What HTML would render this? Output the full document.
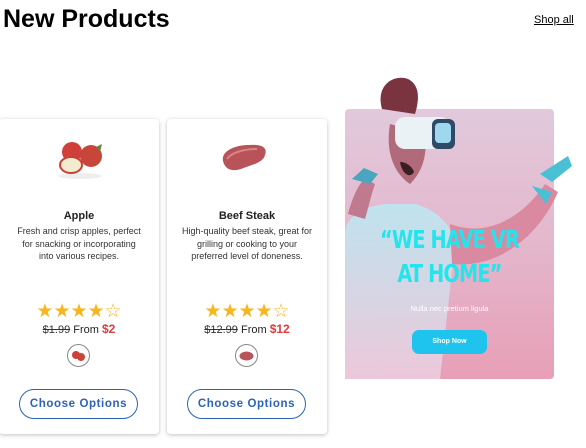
<!DOCTYPE html>
<html><head><meta charset="utf-8"><style>
*{margin:0;padding:0;box-sizing:border-box}
body{width:586px;height:448px;overflow:hidden;background:#fff;font-family:"Liberation Sans",Arial,sans-serif;position:relative}
h1{position:absolute;left:3px;top:5px;font-size:25px;font-weight:bold;color:#000}
.shop{position:absolute;left:534px;top:14px;font-size:11px;color:#000;text-decoration:underline}
.card{position:absolute;top:119px;width:160px;height:315px;background:#fff;border-radius:4px;box-shadow:0 1px 4px rgba(0,0,0,.25);text-align:center}
.t{position:absolute;top:91px;left:0;right:0;font-size:11px;font-weight:bold;color:#222}
.d{position:absolute;top:106px;left:0;right:0;font-size:9px;line-height:12.5px;color:#333;white-space:nowrap}
.stars{position:absolute;top:183px;left:0;right:0;font-size:19px;color:#f6b61e;line-height:20px}
.p{position:absolute;top:203px;left:0;right:0;font-size:11px;color:#222}
.p s{color:#333}.p b{color:#e03b3b;font-size:12px}
.th{position:absolute;top:225px;left:68px;width:23px;height:23px;border:1px solid #888;border-radius:50%}
.btn{position:absolute;top:270px;left:20px;width:119px;height:30px;border:1px solid #2b63b8;border-radius:15px;color:#2b63b8;font-size:11.5px;font-weight:bold;letter-spacing:.6px;line-height:28px}
.ban{position:absolute;left:345px;top:109px;width:209px;height:270px;border-radius:4px;background:linear-gradient(180deg,#e2c9dc 0%,#e4b7cc 50%,#e79fb6 100%)}
.vr{position:absolute;left:0;right:0;text-align:center;color:#22e5ee;font-weight:bold;font-size:25px;line-height:26px;font-family:'Liberation Sans Narrow','DejaVu Sans Condensed',sans-serif;white-space:nowrap;letter-spacing:-1px;transform:scaleX(0.86)}
</style></head><body>
<h1>New Products</h1>
<a class="shop">Shop all</a>

<div class="card" style="left:-1px">
  <svg style="position:absolute;left:55px;top:20px" width="52" height="40">
    <ellipse cx="26" cy="37" rx="22" ry="3" fill="#eee"/>
    <circle cx="18" cy="13" r="10" fill="#d0403a"/>
    <circle cx="37" cy="17" r="11" fill="#c8453a"/>
    <path d="M42 8 l6 -3 l-2 8z" fill="#5a8a3a"/>
    <ellipse cx="17" cy="26" rx="11" ry="8" fill="#f1ecd0" stroke="#c94036" stroke-width="2"/>
  </svg>
  <div class="t">Apple</div>
  <div class="d">Fresh and crisp apples, perfect<br>for snacking or incorporating<br>into various recipes.</div>
  <div class="stars">★★★★☆</div>
  <div class="p"><s>$1.99</s> From <b>$2</b></div>
  <div class="th"><svg width="21" height="21"><circle cx="8" cy="10" r="4" fill="#d0403a"/><circle cx="13" cy="12" r="4" fill="#c8453a"/></svg></div>
  <div class="btn">Choose Options</div>
</div>

<div class="card" style="left:167px">
  <svg style="position:absolute;left:50px;top:20px" width="56" height="40">
    <path d="M6 22 C4 12 18 6 32 6 C44 5 51 8 48 16 C46 24 34 26 24 30 C14 33 8 30 6 22Z" fill="#b8535a"/>
    <path d="M10 20 C14 14 26 10 40 10" stroke="#d8858a" stroke-width="2" fill="none"/>
  </svg>
  <div class="t">Beef Steak</div>
  <div class="d">High-quality beef steak, great for<br>grilling or cooking to your<br>preferred level of doneness.</div>
  <div class="stars">★★★★☆</div>
  <div class="p"><s>$12.99</s> From <b>$12</b></div>
  <div class="th"><svg width="21" height="21"><ellipse cx="10.5" cy="11" rx="7" ry="4.5" fill="#b8535a"/></svg></div>
  <div class="btn">Choose Options</div>
</div>

<div class="ban">
  <svg style="position:absolute;left:-5px;top:-35px" width="240" height="305">
    <defs><linearGradient id="sh" x1="0" y1="0" x2="0" y2="1"><stop offset="0" stop-color="#bfe3ee"/><stop offset="1" stop-color="#ecc8da"/></linearGradient></defs>
    <path d="M5 160 C5 140 30 130 50 130 L75 130 C95 135 112 150 115 170 L100 305 L5 305Z" fill="url(#sh)"/>
    <path d="M42 35 C35 10 55 0 68 5 C82 12 78 30 75 40 Z" fill="#7a3440"/>
    <path d="M50 50 C45 80 55 100 70 110 C80 100 88 85 85 60Z" fill="#b06a7a"/>
    <path d="M60 88 C62 100 70 105 74 98 C72 92 66 88 60 88Z" fill="#3a1e24"/>
    <rect x="55" y="43" width="55" height="32" rx="10" fill="#eaf2f6"/>
    <rect x="92" y="45" width="23" height="30" rx="6" fill="#2e4a66"/>
    <rect x="95" y="49" width="16" height="20" rx="4" fill="#9fd8ee"/>
    <path d="M8 140 C12 125 18 110 25 105 L35 110 C30 125 28 135 25 145Z" fill="#c07a90"/>
    <path d="M110 150 C150 165 185 140 205 110 L218 118 C200 160 160 195 112 190Z" fill="#d98aa0"/>
    <path d="M200 100 L228 82 L232 92 L212 108Z M192 112 L212 118 L206 130Z" fill="#4ac0d5"/>
    <path d="M12 105 L24 94 L38 100 L30 110Z" fill="#4aa6c0"/>
  </svg>
  <div class="vr" style="top:118px">“WE HAVE VR</div>
  <div class="vr" style="top:152px">AT HOME”</div>
  <div style="position:absolute;left:0;right:0;top:195px;text-align:center;color:#fff;font-size:7.5px">Nulla nec pretium ligula</div>
  <div style="position:absolute;left:67px;top:221px;width:75px;height:24px;border-radius:7px;background:#1ec3ee;color:#fff;font-size:7px;font-weight:bold;text-align:center;line-height:24px">Shop Now</div>
</div>
</body></html>
